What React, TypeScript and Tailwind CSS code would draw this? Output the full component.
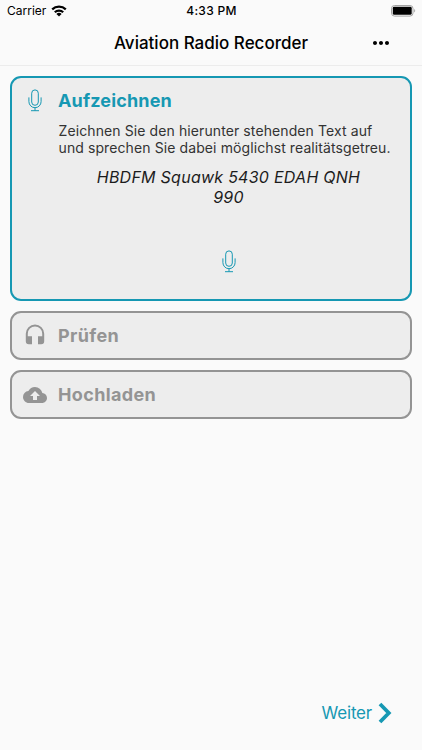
import type { ReactNode } from 'react';
import { MdCloudUpload, MdMoreHoriz } from 'react-icons/md';

const MicIcon = () => (
    <svg width="14" height="23" viewBox="0 0 14 23" fill="none" stroke="currentColor" strokeWidth="1">
        <rect x="3.7" y="0.9" width="6.6" height="15.4" rx="3.3" />
        <path d="M0.9 8.4v4.2a6.1 6.1 0 0 0 12.2 0V8.4M7 18.7v3M3 21.7h8" />
    </svg>
);

const HeadphonesIcon = () => (
    <svg width="24" height="24" viewBox="0 0 24 24" fill="currentColor">
        <path d="M12 .5a9.2 9.2 0 0 0-9.2 9.2v7.5a3 3 0 0 0 3 3H9v-8H4.8V9.7a7.2 7.2 0 0 1 14.4 0v2.5H15v8h3.2a3 3 0 0 0 3-3V9.7A9.2 9.2 0 0 0 12 .5z" />
    </svg>
);

const WifiIcon = () => (
    <svg width="16" height="12" viewBox="0 0 16 12" fill="none" stroke="#000" strokeWidth="2.2">
        <path d="M1.2 4.4a9.8 9.8 0 0 1 13.6 0" />
        <path d="M3.8 7.3a5.9 5.9 0 0 1 8.4 0" />
        <path d="M8 11.6L5.4 9a3.7 3.7 0 0 1 5.2 0z" fill="#000" stroke="none" />
    </svg>
);

const BatteryIcon = () => (
    <svg width="25" height="12" viewBox="0 0 25 12">
        <rect x="0.5" y="0.5" width="21.5" height="10.6" rx="3" fill="none" stroke="#a3a3a3" />
        <rect x="1.8" y="1.8" width="18.9" height="8" rx="1.4" fill="#000" />
        <path d="M23.2 4.1c1.3.4 1.3 3 0 3.4z" fill="#a3a3a3" />
    </svg>
);

const StatusBar = () => (
    <div className="grid h-[21px] grid-cols-3 items-center pr-1.5 pl-[7px] text-black">
        <div className="flex items-center gap-[5px] pt-px text-[12px]">
            <span>Carrier</span>
            <WifiIcon />
        </div>
        <div className="pt-px text-center text-[12px] font-medium tracking-[0.3px]">4:33 PM</div>
        <div className="flex justify-end">
            <BatteryIcon />
        </div>
    </div>
);

interface StepProps {
    icon: ReactNode;
    title: string;
}

const Step = ({ icon, title }: StepProps) => (
    <div className="flex h-[49px] items-center rounded-[11px] border-2 border-[#949494] bg-[#ededed] text-[#949494]">
        <div className="flex w-[46px] justify-center">{icon}</div>
        <h2 className="text-[18px] font-bold tracking-[0.35px]">{title}</h2>
    </div>
);

const App = () => {
    return (
        <div className="flex h-[750px] w-[422px] flex-col bg-[#fafafa] font-['Inter',sans-serif]">
            <header className="h-[66px] border-b border-[#ececec]">
                <StatusBar />
                <div className="grid h-[44px] grid-cols-[60px_1fr_60px] items-center">
                    <h1 className="col-start-2 pt-[2px] text-center text-[17px] font-medium whitespace-nowrap text-black">
                        Aviation Radio Recorder
                    </h1>
                    <button className="ml-[7px] justify-self-start">
                        <MdMoreHoriz className="size-6" />
                    </button>
                </div>
            </header>

            <main className="flex flex-1 flex-col gap-2.5 px-[10px] pt-[10px]">
                <section className="h-[225px] rounded-[11px] border-2 border-[#1698b3] bg-[#ededed]">
                    <div className="flex h-[44px] items-center text-[#1698b3]">
                        <div className="flex w-[46px] justify-center pt-px">
                            <MicIcon />
                        </div>
                        <h2 className="text-[18px] font-bold tracking-[0.15px]">Aufzeichnen</h2>
                    </div>
                    <p className="pl-[46.5px] text-[14px] leading-[17px] tracking-[0.1px] whitespace-nowrap text-[#333]">
                        Zeichnen Sie den hierunter stehenden Text auf
                        <br />
                        und sprechen Sie dabei möglichst realitätsgetreu.
                    </p>
                    <p className="mt-[12px] ml-[35px] text-center text-[16px] leading-[19.5px] tracking-[0.26px] whitespace-nowrap text-[#1c1c1c] italic">
                        HBDFM Squawk 5430 EDAH QNH
                        <br />
                        990
                    </p>
                    <button className="mt-[43px] ml-[210px] block text-[#1698b3]">
                        <MicIcon />
                    </button>
                </section>

                <Step icon={<HeadphonesIcon />} title="Prüfen" />
                <Step icon={<MdCloudUpload className="size-6" />} title="Hochladen" />
            </main>

            <footer className="flex items-center justify-end gap-[6px] pr-[30px] pb-[24px] text-[#1698b3]">
                <span className="text-[17px] tracking-[-0.2px]">Weiter</span>
                <svg width="14" height="22" viewBox="0 0 14 22" fill="none" stroke="currentColor" strokeWidth="3.8">
                    <path d="M2 2l8.8 9L2 20" />
                </svg>
            </footer>
        </div>
    );
};

export default App;
